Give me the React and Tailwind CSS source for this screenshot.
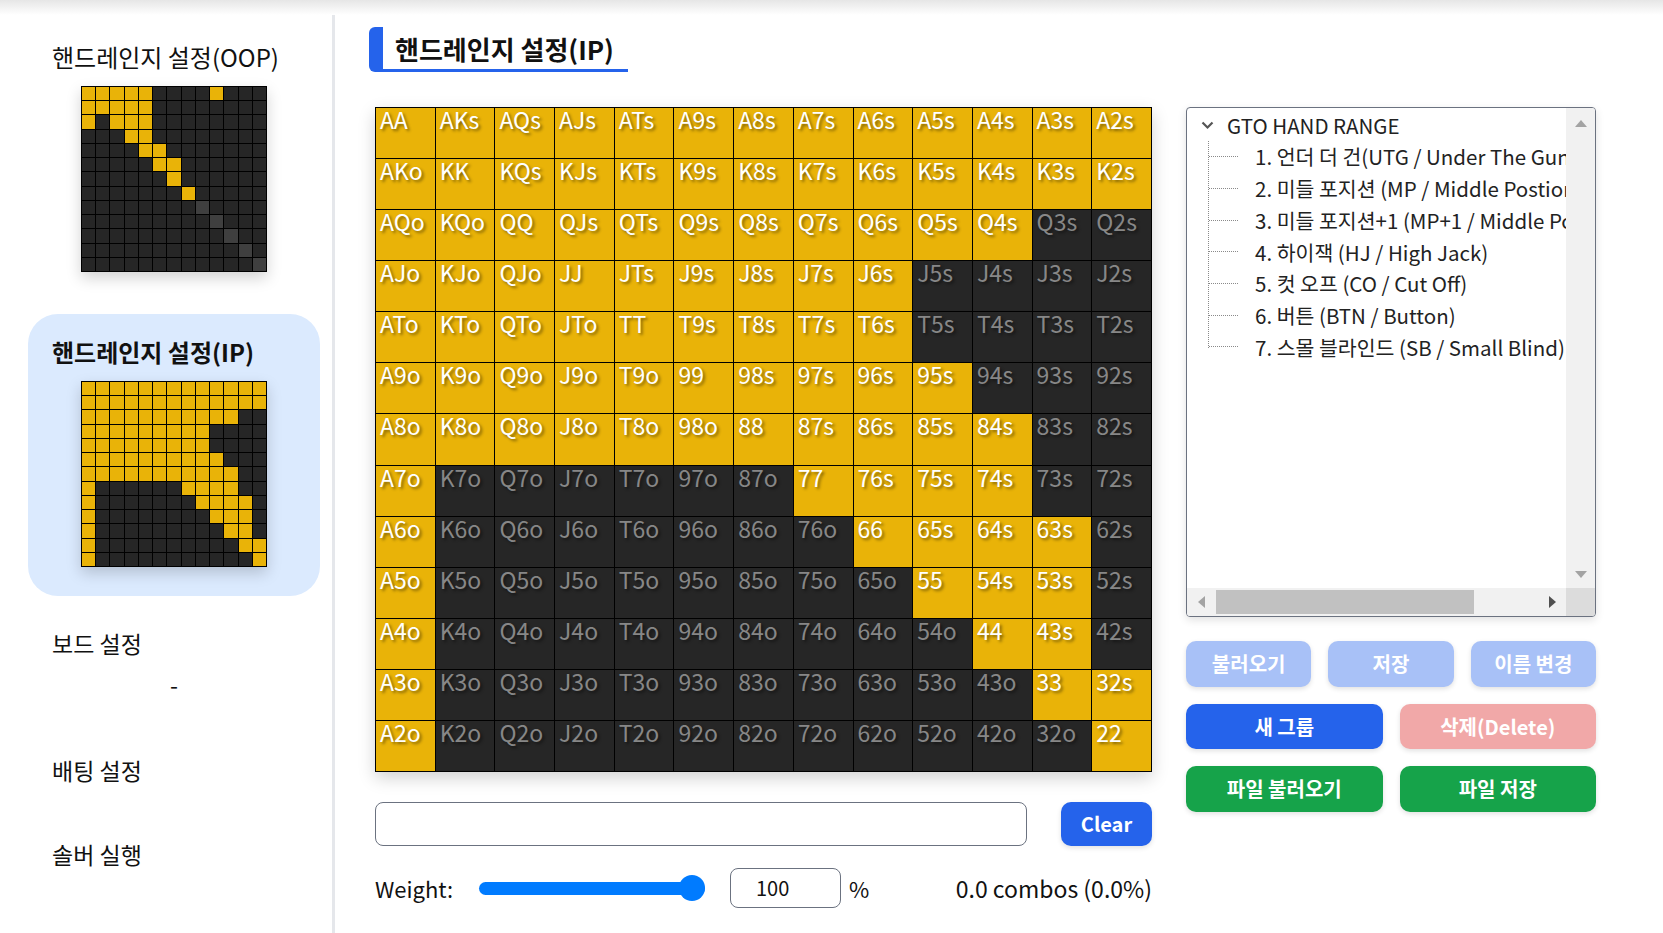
import React from "react";

const RANKS = "AKQJT98765432".split("");

const IP_RANGES = [
  [[0, 12]],
  [[0, 12]],
  [[0, 10]],
  [[0, 8]],
  [[0, 8]],
  [[0, 9]],
  [[0, 10]],
  [[0, 0], [7, 10]],
  [[0, 0], [8, 11]],
  [[0, 0], [9, 11]],
  [[0, 0], [10, 11]],
  [[0, 0], [11, 12]],
  [[0, 0], [12, 12]],
];

const OOP_RANGES = [
  [[0, 4], [9, 9]],
  [[0, 4]],
  [[0, 0], [2, 4]],
  [[3, 4]],
  [[4, 5]],
  [[5, 6]],
  [[6, 6]],
  [[7, 7]],
  [],
  [],
  [],
  [],
  [],
];

const inRange = (ranges, r, c) => ranges[r].some(([a, b]) => c >= a && c <= b);

const label = (r, c) => {
  if (r === c) return RANKS[r] + RANKS[c];
  if (c > r) return RANKS[r] + RANKS[c] + "s";
  return RANKS[c] + RANKS[r] + "o";
};

function MiniGrid({ ranges, grayDiag }) {
  const cells = [];
  for (let r = 0; r < 13; r++) {
    for (let c = 0; c < 13; c++) {
      const on = inRange(ranges, r, c);
      const gray = grayDiag && r === c && r >= 8;
      cells.push(
        <div
          key={r + "-" + c}
          className={on ? "bg-[#e9b308]" : gray ? "bg-[#3f3f3f]" : "bg-[#262626]"}
        />
      );
    }
  }
  return (
    <div className="mx-auto grid h-[186px] w-[186px] grid-cols-13 grid-rows-13 gap-px bg-black p-px shadow-[0_6px_14px_rgba(0,0,0,0.18)]">
      {cells}
    </div>
  );
}

function MainGrid() {
  const cells = [];
  for (let r = 0; r < 13; r++) {
    for (let c = 0; c < 13; c++) {
      const on = inRange(IP_RANGES, r, c);
      cells.push(
        <div
          key={r + "-" + c}
          className={
            "pl-[4px] pt-0 text-[23px] leading-none [text-shadow:2px_2px_3px_rgba(0,0,0,0.45)] " +
            (on ? "bg-[#e9b308] text-white" : "bg-[#262626] text-[#878787]")
          }
        >
          {label(r, c)}
        </div>
      );
    }
  }
  return (
    <div className="grid h-[665px] w-[777px] grid-cols-13 grid-rows-13 gap-px bg-black p-px shadow-[0_6px_16px_rgba(0,0,0,0.18)]">
      {cells}
    </div>
  );
}

function SideCard({ title, active, children }) {
  return (
    <div
      className={
        "h-[282px] rounded-[30px] px-[24px] pt-[22px] " + (active ? "bg-[#dbeafe]" : "")
      }
    >
      <div
        className={
          "text-[24px] leading-[32px] text-[#111] " + (active ? "font-bold" : "")
        }
      >
        {title}
      </div>
      <div className="mt-[13px]">{children}</div>
    </div>
  );
}

const TREE_ITEMS = [
  "1. 언더 더 건(UTG / Under The Gun)",
  "2. 미들 포지션 (MP / Middle Postion)",
  "3. 미들 포지션+1 (MP+1 / Middle Postion+1)",
  "4. 하이잭 (HJ / High Jack)",
  "5. 컷 오프 (CO / Cut Off)",
  "6. 버튼 (BTN / Button)",
  "7. 스몰 블라인드 (SB / Small Blind)",
];

function TreeBox() {
  return (
    <div className="flex h-[510px] w-[410px] flex-col overflow-hidden rounded-[4px] border border-[#6b7280] bg-white shadow-[0_3px_8px_rgba(0,0,0,0.12)]">
      <div className="flex min-h-0 flex-1">
        <div className="min-w-0 flex-1 overflow-hidden pt-[1px] text-[20.5px] text-[#222]">
          <div className="flex h-[32px] items-center whitespace-nowrap">
            <svg
              className="ml-[14px] mr-[13px] shrink-0"
              width="13"
              height="9"
              viewBox="0 0 13 9"
            >
              <path d="M1.5 1.5 L6.5 6.5 L11.5 1.5" fill="none" stroke="#555" strokeWidth="2.2" />
            </svg>
            <span className="shrink-0">GTO HAND RANGE</span>
          </div>
          <div className="relative">
            <div className="absolute left-[21px] top-0 h-[207px] border-l border-dotted border-[#8a8a8a]" />
            {TREE_ITEMS.map((t) => (
              <div key={t} className="flex h-[31.7px] items-center whitespace-nowrap">
                <div className="ml-[22px] w-[29px] shrink-0 border-t border-dotted border-[#8a8a8a]" />
                <span className="ml-[17px] shrink-0">{t}</span>
              </div>
            ))}
          </div>
        </div>
        <div className="flex w-[29px] shrink-0 flex-col items-center justify-between bg-[#f1f1f1] pb-[10px] pt-[12px]">
          <svg width="12" height="7" viewBox="0 0 12 7">
            <path d="M0 7 L6 0 L12 7 Z" fill="#a3a3a3" />
          </svg>
          <svg width="12" height="7" viewBox="0 0 12 7">
            <path d="M0 0 L6 7 L12 0 Z" fill="#a3a3a3" />
          </svg>
        </div>
      </div>
      <div className="flex h-[28px]">
        <div className="flex flex-1 items-center bg-[#f1f1f1]">
          <svg className="ml-[11px]" width="7" height="12" viewBox="0 0 7 12">
            <path d="M7 0 L0 6 L7 12 Z" fill="#a3a3a3" />
          </svg>
          <div className="ml-[11px] h-[24px] w-[258px] bg-[#c1c1c1]" />
          <div className="flex-1" />
          <svg className="mr-[10px]" width="7" height="12" viewBox="0 0 7 12">
            <path d="M0 0 L7 6 L0 12 Z" fill="#505050" />
          </svg>
        </div>
        <div className="w-[29px] bg-[#dcdcdc]" />
      </div>
    </div>
  );
}

function Btn({ children, className }) {
  return (
    <div
      className={
        "flex items-center justify-center rounded-[10px] text-[20px] font-bold text-white shadow-[0_2px_5px_rgba(0,0,0,0.12)] " +
        className
      }
    >
      {children}
    </div>
  );
}

export default function App() {
  return (
    <div className="flex h-[933px] w-[1663px] flex-col overflow-hidden bg-white font-['Noto_Sans_CJK_KR',sans-serif] text-[#111]">
      <div className="h-[15px] bg-linear-to-b from-[#e6e6e6] to-white" />
      <div className="flex flex-1">
        <aside className="w-[335px] shrink-0 border-r-[3px] border-[#e5e7eb] pl-[28px] pr-[12px]">
          <div className="mt-[4px]">
            <SideCard title="핸드레인지 설정(OOP)">
              <MiniGrid ranges={OOP_RANGES} grayDiag />
            </SideCard>
          </div>
          <div className="mt-[13px]">
            <SideCard title="핸드레인지 설정(IP)" active>
              <MiniGrid ranges={IP_RANGES} />
            </SideCard>
          </div>
          <div className="px-[24px] text-[23px] leading-[32px]">
            <div className="mt-[31px]">보드 설정</div>
            <div className="mt-[9px] text-center">-</div>
            <div className="mt-[54px]">배팅 설정</div>
            <div className="mt-[52px]">솔버 실행</div>
          </div>
        </aside>
        <main className="flex-1">
          <div className="ml-[34px] mt-[12px] flex h-[45px] w-[259px] items-center rounded-l-[6px] border-b-[3px] border-l-[14px] border-[#2563eb] pl-[12px] text-[26px] font-bold text-[#111]">
            핸드레인지 설정(IP)
          </div>
          <div className="mt-[35px] flex">
            <div className="ml-[40px] w-[777px]">
              <MainGrid />
              <div className="mt-[30px] flex h-[44px] gap-[34px]">
                <div className="flex-1 rounded-[8px] border border-[#6b7280] bg-white" />
                <Btn className="w-[91px] bg-[#2563eb]">Clear</Btn>
              </div>
              <div className="mt-[22px] flex h-[40px] items-center text-[22px]">
                <span className="w-[104px]">Weight:</span>
                <div className="relative flex h-[26px] w-[226px] items-center">
                  <div className="h-[13px] w-full rounded-full bg-[#007bff]" />
                  <div className="absolute right-0 top-0 h-[26px] w-[26px] rounded-full bg-[#007bff]" />
                </div>
                <div className="ml-[25px] flex h-[40px] w-[111px] items-center rounded-[8px] border border-[#6b7280] pl-[25px] text-[20px]">
                  100
                </div>
                <span className="ml-[8px]">%</span>
                <span className="ml-auto text-[23px]">0.0 combos (0.0%)</span>
              </div>
            </div>
            <div className="ml-[34px] w-[410px]">
              <TreeBox />
              <div className="mt-[24px] flex h-[46px] gap-[17px]">
                <Btn className="flex-1 bg-[#a8c1f7]">불러오기</Btn>
                <Btn className="flex-1 bg-[#a8c1f7]">저장</Btn>
                <Btn className="flex-1 bg-[#a8c1f7]">이름 변경</Btn>
              </div>
              <div className="mt-[17px] flex h-[45px] gap-[17px]">
                <Btn className="flex-1 bg-[#2563eb]">새 그룹</Btn>
                <Btn className="flex-1 bg-[#f1a8a8]">삭제(Delete)</Btn>
              </div>
              <div className="mt-[17px] flex h-[46px] gap-[17px]">
                <Btn className="flex-1 bg-[#16a34a]">파일 불러오기</Btn>
                <Btn className="flex-1 bg-[#16a34a]">파일 저장</Btn>
              </div>
            </div>
          </div>
        </main>
      </div>
    </div>
  );
}
